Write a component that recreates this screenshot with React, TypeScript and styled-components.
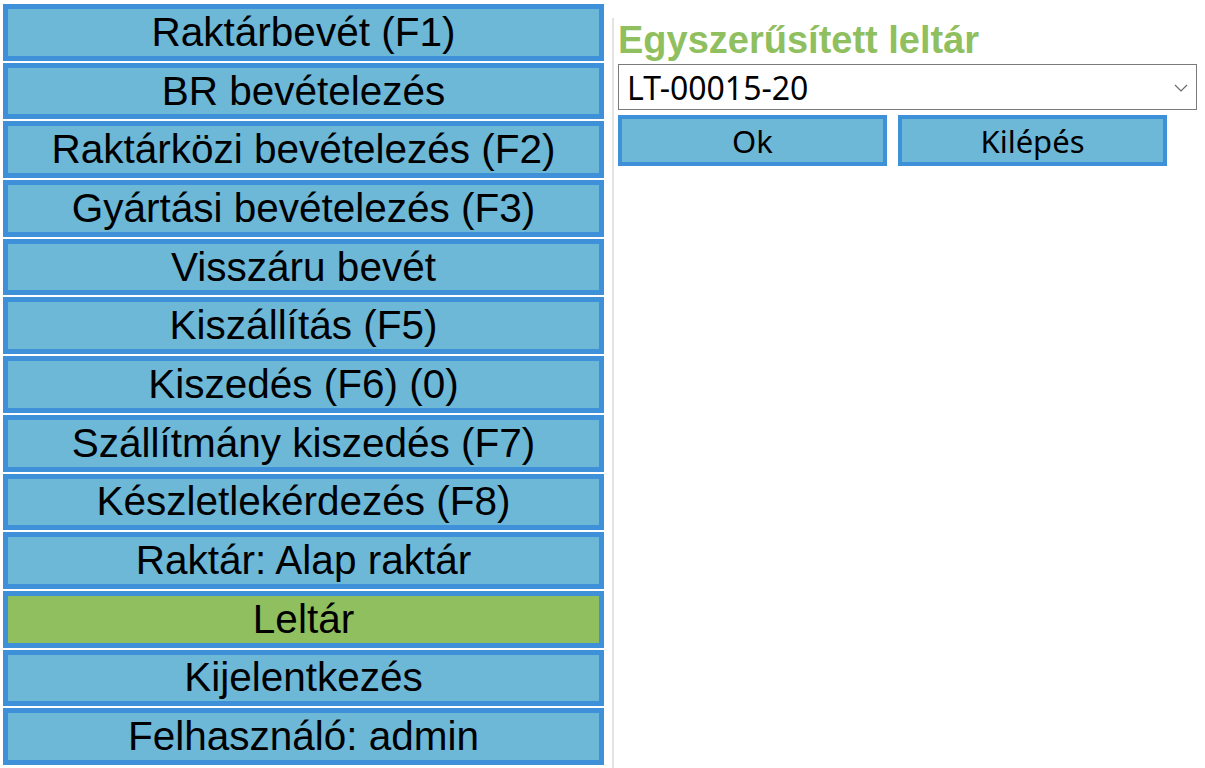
import styled, { createGlobalStyle } from 'styled-components';

const GlobalStyle = createGlobalStyle`
  html, body {
    margin: 0;
    padding: 0;
    background: #ffffff;
  }
  * {
    box-sizing: border-box;
  }
`;

const menuItems = [
  'Raktárbevét (F1)',
  'BR bevételezés',
  'Raktárközi bevételezés (F2)',
  'Gyártási bevételezés (F3)',
  'Visszáru bevét',
  'Kiszállítás (F5)',
  'Kiszedés (F6) (0)',
  'Szállítmány kiszedés (F7)',
  'Készletlekérdezés (F8)',
  'Raktár: Alap raktár',
  'Leltár',
  'Kijelentkezés',
  'Felhasználó: admin',
];

const App = () => {
  return (
    <>
      <GlobalStyle />
      <Page>
        <Menu>
          {menuItems.map((item) => (
            <MenuButton key={item} $active={item === 'Leltár'}>
              {item}
            </MenuButton>
          ))}
        </Menu>
        <Content>
          <Title>Egyszerűsített leltár</Title>
          <SelectBox>
            <Select defaultValue="LT-00015-20">
              <option value="LT-00015-20">LT-00015-20</option>
            </Select>
            <Chevron width="14" height="8" viewBox="0 0 14 8">
              <path d="M1 1 L7 7 L13 1" fill="none" stroke="#6b6b6b" strokeWidth="1.2" />
            </Chevron>
          </SelectBox>
          <Actions>
            <ActionButton>Ok</ActionButton>
            <ActionButton>Kilépés</ActionButton>
          </Actions>
        </Content>
      </Page>
    </>
  );
};

export default App;

const Page = styled.div`
  display: flex;
  height: 768px;
  width: 1205px;
  overflow: hidden;
`;

const Menu = styled.div`
  width: 607px;
  padding: 4px 3px 0 3px;
  display: flex;
  flex-direction: column;
  gap: 2px;
`;

const MenuButton = styled.div<{ $active?: boolean }>`
  height: 56.7px;
  flex-shrink: 0;
  border: 5px solid #3e90d8;
  background: ${(p) => (p.$active ? '#8fbf5e' : '#6db7d7')};
  color: #000;
  font-family: 'Liberation Sans', Arial, sans-serif;
  font-size: 40.5px;
  display: flex;
  align-items: center;
  justify-content: center;
  white-space: nowrap;
  cursor: pointer;
`;

const Content = styled.div`
  flex: 1;
  margin-left: 5px;
  margin-top: 18px;
  border-left: 2px solid #e4e4e4;
  padding: 2px 8px 0 4px;
`;

const Title = styled.h1`
  margin: 0;
  font-family: 'Liberation Sans', Arial, sans-serif;
  font-weight: bold;
  font-size: 38px;
  line-height: 40px;
  color: #8fbf5e;
`;

const SelectBox = styled.div`
  position: relative;
  margin-top: 4px;
  width: 579px;
`;

const Select = styled.select`
  appearance: none;
  width: 100%;
  height: 46px;
  border: 1px solid #7a7a7a;
  border-radius: 0;
  background: #fff;
  padding: 0 30px 0 8px;
  font-family: 'Noto Sans', 'Open Sans', sans-serif;
  font-size: 32px;
  color: #000;
  outline: none;
`;

const Chevron = styled.svg`
  position: absolute;
  right: 9px;
  top: 20px;
  pointer-events: none;
`;

const Actions = styled.div`
  display: flex;
  gap: 11px;
  margin-top: 5px;
`;

const ActionButton = styled.button`
  width: 269px;
  height: 51px;
  border: 4px solid #3e90d8;
  border-radius: 0;
  background: #6db7d7;
  color: #000;
  font-family: 'Noto Sans', 'Open Sans', sans-serif;
  font-size: 31px;
  padding: 0;
  display: flex;
  align-items: center;
  justify-content: center;
  cursor: pointer;
`;
